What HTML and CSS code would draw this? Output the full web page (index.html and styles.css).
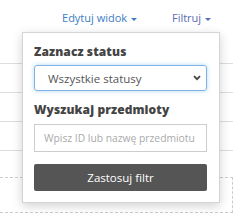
FILE: index.html
```html
<!DOCTYPE html>
<html lang="pl">
<head>
  <meta charset="UTF-8" />
  <meta name="viewport" content="width=device-width, initial-scale=1" />
  <title>Filtruj</title>
  <link rel="stylesheet" href="styles.css">
</head>
<body>

  <div class="toolbar">
    <a class="toolbar-link" href="#">Edytuj widok <span class="caret"></span></a>
    <a class="toolbar-link visited" href="#">Filtruj <span class="caret"></span></a>
  </div>

  <div class="list">
    <div class="row"></div>
    <div class="row"></div>
    <div class="row"></div>
    <div class="row empty"></div>
    <div class="dropzone"></div>
  </div>

  <div class="filter-panel">
    <label class="filter-label">Zaznacz status</label>
    <div class="select">
      <span>Wszystkie statusy</span>
      <svg class="chevron" width="8" height="6" viewBox="0 0 8 6">
        <path d="M1 1.2 L4 4.2 L7 1.2" fill="none" stroke="#444" stroke-width="1.8"/>
      </svg>
    </div>
    <label class="filter-label second">Wyszukaj przedmioty</label>
    <input class="search" type="text" placeholder="Wpisz ID lub nazwę przedmiotu">
    <button class="apply">Zastosuj filtr</button>
  </div>

</body>
</html>
```

FILE: styles.css
```css
* {
  box-sizing: border-box;
  margin: 0;
  padding: 0;
  font-family: 'Open Sans', sans-serif;
}

body {
  background: #fff;
  width: 244px;
  height: 218px;
  overflow: hidden;
  position: relative;
}

.toolbar {
  height: 32px;
  display: flex;
  justify-content: flex-end;
  align-items: flex-start;
  padding: 8px 33px 0 0;
  gap: 35px;
}

.toolbar-link {
  font-size: 11px;
  line-height: 20px;
  color: #3b7dc4;
  text-decoration: none;
  white-space: nowrap;
}

.toolbar-link.visited {
  color: #5a6db3;
}

.caret {
  display: inline-block;
  width: 0;
  height: 0;
  border-left: 3px solid transparent;
  border-right: 3px solid transparent;
  border-top: 3px solid currentColor;
  vertical-align: middle;
  margin-left: 1px;
}

.list {
  width: 233px;
  margin-top: 31px;
}

.row {
  height: 29px;
  border-top: 1px solid #ddd;
}

.row.empty {
  height: 27px;
}

.dropzone {
  height: 36px;
  margin-left: -10px;
  border: 1px dashed #ccc;
}

.filter-panel {
  position: absolute;
  left: 22px;
  top: 32px;
  width: 198px;
  background: #fff;
  border: 1px solid #d4d4d4;
  box-shadow: 0 3px 10px rgba(0, 0, 0, 0.18);
  padding: 11px 12px 11px 11px;
  display: flex;
  flex-direction: column;
}

.filter-label {
  font-size: 12px;
  line-height: 16px;
  font-weight: 800;
  color: #444;
  letter-spacing: 0.1px;
}

.filter-label.second {
  margin-top: 11px;
}

.select {
  margin-top: 5px;
  height: 26px;
  border: 1px solid #7fb3e6;
  border-radius: 3px;
  box-shadow: 0 0 4px rgba(102, 175, 233, 0.5);
  display: flex;
  align-items: center;
  justify-content: space-between;
  padding: 0 5px 0 13px;
  font-size: 11.5px;
  color: #555;
}

.search {
  margin-top: 6px;
  height: 28px;
  border: 1px solid #ccc;
  border-radius: 0;
  padding: 0 4px 0 9px;
  font-size: 10.3px;
  color: #555;
  outline: none;
}

.search::placeholder {
  color: #aaa;
}

.apply {
  margin-top: 12px;
  height: 27px;
  border: none;
  border-radius: 2px;
  background: #555;
  color: #fff;
  font-size: 11.5px;
  cursor: pointer;
}
```
